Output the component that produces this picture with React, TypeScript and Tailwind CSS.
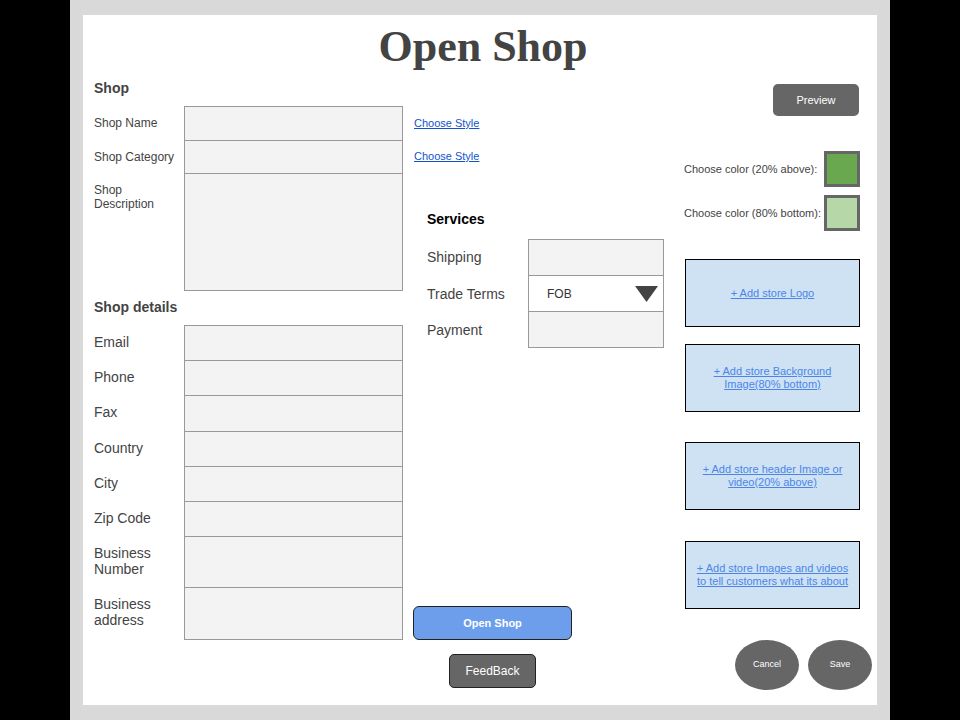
import React from "react";

const shopRows = [
  { label: "Shop Name", h: "h-[35px]" },
  { label: "Shop Category", h: "h-[34px]" },
  { label: "Shop Description", h: "h-[118px]" },
];

const detailRows = [
  { label: "Email", h: "h-[36px]" },
  { label: "Phone", h: "h-[36px]" },
  { label: "Fax", h: "h-[37px]" },
  { label: "Country", h: "h-[36px]" },
  { label: "City", h: "h-[36px]" },
  { label: "Zip Code", h: "h-[36px]" },
  { label: "Business Number", h: "h-[52px]" },
  { label: "Business address", h: "h-[53px]" },
];

const uploads = [
  { text: "+ Add store Logo", mt: "mt-[28px]" },
  { text: "+ Add store Background Image(80% bottom)", mt: "mt-[17px]" },
  { text: "+ Add store header Image or video(20% above)", mt: "mt-[30px]" },
  { text: "+ Add store Images and videos to tell customers what its about", mt: "mt-[31px]" },
];

const App: React.FC = () => {
  return (
    <div className="w-[960px] h-[720px] bg-black flex justify-start font-['Liberation_Sans',Arial,sans-serif]">
      <div className="ml-[70px] w-[820px] h-[720px] bg-[#d9d9d9] px-[13px] py-[15px]">
        <div className="w-[794px] h-[690px] bg-white flex flex-col pl-[11px] pr-[5px]">
          <h1 className="h-[65px] pt-[7px] text-center text-[44px] leading-[50px] font-bold text-[#434343] font-['Liberation_Serif','Times_New_Roman',serif]">
            Open Shop
          </h1>

          <div className="flex h-[625px]">
            {/* left column */}
            <div className="w-[309px] flex flex-col">
              <div className="text-[14px] leading-[16px] font-bold text-[#434343]">Shop</div>
              <div className="mt-[10px]">
                {shopRows.map((r, i) => (
                  <div key={r.label} className={`grid grid-cols-[90px_219px] ${i > 0 ? "-mt-px" : ""}`}>
                    <div className="pt-[10px] pr-[4px] text-[12px] leading-[14px] text-[#434343]">{r.label}</div>
                    <div className={`${r.h} border border-[#999999] bg-[#f3f3f3]`} />
                  </div>
                ))}
              </div>

              <div className="mt-[8px] text-[14px] leading-[16px] font-bold text-[#434343]">Shop details</div>
              <div className="mt-[10px]">
                {detailRows.map((r, i) => (
                  <div key={r.label} className={`grid grid-cols-[90px_219px] ${i > 0 ? "-mt-px" : ""}`}>
                    <div className="pt-[9px] pr-2 text-[14px] leading-[16px] text-[#434343]">{r.label}</div>
                    <div className={`${r.h} border border-[#999999] bg-[#f3f3f3]`} />
                  </div>
                ))}
              </div>
            </div>

            {/* middle column */}
            <div className="ml-[10px] w-[250px] flex flex-col pb-[17px]">
              <a href="#" className="mt-[37px] ml-px text-[11px] leading-[13px] text-[#1155cc] underline">
                Choose Style
              </a>
              <a href="#" className="mt-[20px] ml-px text-[11px] leading-[13px] text-[#1155cc] underline">
                Choose Style
              </a>

              <div className="mt-[48px] ml-[14px] text-[14px] leading-[16px] font-bold text-black">Services</div>
              <div className="mt-[12px] ml-[14px] grid grid-cols-[101px_136px]">
                <div className="self-center text-[14px] text-[#434343]">Shipping</div>
                <div className="h-[37px] border border-[#999999] bg-[#f3f3f3]" />
                <div className="self-center text-[14px] text-[#434343]">Trade Terms</div>
                <div className="-mt-px h-[37px] border border-[#999999] bg-white flex items-center pl-[18px] pr-[5px]">
                  <span className="text-[12px] text-[#333333]">FOB</span>
                  <svg className="ml-auto" width="23" height="16" viewBox="0 0 23 16">
                    <polygon points="0,0 23,0 11.5,16" fill="#434343" />
                  </svg>
                </div>
                <div className="self-center text-[14px] text-[#434343]">Payment</div>
                <div className="-mt-px h-[37px] border border-[#999999] bg-[#f3f3f3]" />
              </div>

              <div className="mt-auto w-[159px] flex flex-col items-center">
                <button className="w-[159px] h-[34px] rounded-[6px] border border-[#222222] bg-[#6d9eeb] text-white text-[11px] font-bold">
                  Open Shop
                </button>
                <button className="mt-[14px] w-[87px] h-[34px] rounded-[5px] border border-[#222222] bg-[#666666] text-white text-[12px]">
                  FeedBack
                </button>
              </div>
            </div>

            {/* right column */}
            <div className="ml-[21px] w-[188px] flex flex-col">
              <button className="mt-[4px] ml-[89px] w-[86px] h-[32px] rounded-[5px] bg-[#666666] text-white text-[11px]">
                Preview
              </button>

              <div className="mt-[35px] w-[176px] flex items-center justify-between">
                <span className="text-[11px] text-[#434343]">Choose color (20% above):</span>
                <div className="w-[36px] h-[36px] border-[3px] border-[#666666] bg-[#6aa84f]" />
              </div>
              <div className="mt-[8px] w-[176px] flex items-center justify-between">
                <span className="text-[11px] text-[#434343]">Choose color (80% bottom):</span>
                <div className="w-[36px] h-[36px] border-[3px] border-[#666666] bg-[#b6d7a8]" />
              </div>

              {uploads.map((u) => (
                <div
                  key={u.text}
                  className={`${u.mt} ml-px w-[175px] h-[68px] border border-black bg-[#cfe2f3] flex items-center justify-center px-[5px] text-center`}
                >
                  <a href="#" className="text-[11px] leading-[13px] text-[#4a86e8] underline">
                    {u.text}
                  </a>
                </div>
              ))}

              <div className="mt-[31px] ml-[51px] flex gap-[9px]">
                <button className="w-[64px] h-[50px] rounded-[50%] bg-[#666666] text-white text-[9px]">Cancel</button>
                <button className="w-[64px] h-[50px] rounded-[50%] bg-[#666666] text-white text-[9px]">Save</button>
              </div>
            </div>
          </div>
        </div>
      </div>
    </div>
  );
};

export default App;
